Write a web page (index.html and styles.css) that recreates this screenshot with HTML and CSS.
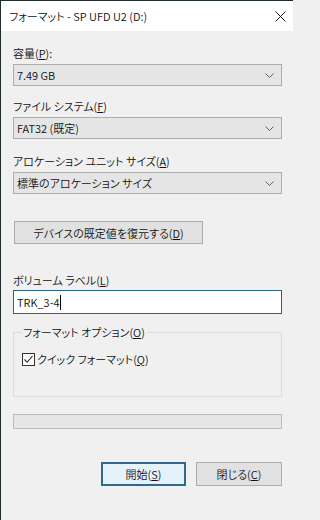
FILE: index.html
```html
<!DOCTYPE html>
<html lang="ja">
<head>
<meta charset="utf-8">
<title>フォーマット</title>
<link rel="stylesheet" href="styles.css">
</head>
<body>
<div class="window">
  <div class="titlebar">
    <span class="title">フォーマット - SP UFD U2 (D:)</span>
    <svg class="close" width="11" height="11" viewBox="0 0 11 11"><path d="M0.5 0.5 L10.5 10.5 M10.5 0.5 L0.5 10.5" stroke="#1a1a1a" stroke-width="1" fill="none"/></svg>
  </div>
  <div class="content">
    <div class="label l1">容量(<u>P</u>):</div>
    <div class="combo"><span>7.49 GB</span><svg class="chev" width="9" height="5" viewBox="0 0 9 5"><path d="M0.5 0.5 L4.5 4.5 L8.5 0.5" stroke="#606060" fill="none"/></svg></div>

    <div class="label l2">ファイル システム(<u>F</u>)</div>
    <div class="combo"><span>FAT32 (既定)</span><svg class="chev" width="9" height="5" viewBox="0 0 9 5"><path d="M0.5 0.5 L4.5 4.5 L8.5 0.5" stroke="#606060" fill="none"/></svg></div>

    <div class="label l3">アロケーション ユニット サイズ(<u>A</u>)</div>
    <div class="combo"><span>標準のアロケーション サイズ</span><svg class="chev" width="9" height="5" viewBox="0 0 9 5"><path d="M0.5 0.5 L4.5 4.5 L8.5 0.5" stroke="#606060" fill="none"/></svg></div>

    <div class="restore-row"><div class="btn restore">デバイスの既定値を復元する(<u>D</u>)</div></div>

    <div class="label l4">ボリューム ラベル(<u>L</u>)</div>
    <div class="textbox"><span>TRK_3-4</span><span class="caret"></span></div>

    <fieldset class="group">
      <legend>フォーマット オプション(<u>O</u>)</legend>
      <div class="check">
        <span class="box"><svg width="11" height="11" viewBox="0 0 11 11"><path d="M1.5 5.5 L4.2 8.3 L9.5 2" stroke="#222" stroke-width="1.1" fill="none"/></svg></span>
        <span>クイック フォーマット(<u>Q</u>)</span>
      </div>
    </fieldset>

    <div class="progress"></div>

    <div class="actions">
      <div class="btn primary">開始(<u>S</u>)</div>
      <div class="btn close-btn">閉じる(<u>C</u>)</div>
    </div>
  </div>
</div>
</body>
</html>
```

FILE: styles.css
```css
* { box-sizing: border-box; }
html { background: #f0f0f0; }
html, body { margin: 0; padding: 0; }
body {
  width: 293px;
  height: 520px;
  overflow: hidden;
  background: #f0f0f0;
  font-family: "Noto Sans CJK JP", "Noto Sans", sans-serif;
  font-size: 11px;
  font-weight: 350;
  color: #111;
  font-feature-settings: "palt";
}
u { text-decoration: underline; text-underline-offset: 1px; }
.window {
  width: 293px;
  height: 520px;
  border-left: 1px solid #1f2d2d;
  border-top: 1px solid #1f2d2d;
  background: #f0f0f0;
}
.titlebar {
  height: 30px;
  background: #fff;
  display: flex;
  align-items: center;
  justify-content: space-between;
  padding: 0 7px 0 8px;
}
.title { font-size: 11px; line-height: 16px; }
.close { display: block; margin-top: 1px; }
.content {
  padding: 13px 11px 0 12px;
  display: flex;
  flex-direction: column;
}
.label { line-height: 18px; height: 18px; margin-bottom: 2px; }
.l2 { margin-top: 11px; }
.l3 { margin-top: 13px; }
.l4 { margin-top: 27px; margin-bottom: 1px; }
.combo {
  height: 22px;
  border: 1px solid #adadad;
  background: #e5e5e5;
  display: flex;
  align-items: center;
  justify-content: space-between;
  padding: 0 7px 0 3px;
}
.combo span { line-height: 16px; }
.chev { display: block; }
.restore-row { margin-top: 27px; display: flex; padding-left: 1px; }
.btn {
  height: 23px;
  border: 1px solid #adadad;
  background: #e1e1e1;
  display: flex;
  align-items: center;
  justify-content: center;
  line-height: 16px;
}
.restore { width: 189px; }
.textbox {
  height: 24px;
  border: 1px solid #2c6488;
  background: #fff;
  display: flex;
  align-items: center;
  padding-left: 3px;
}
.caret { width: 1px; height: 15px; background: #000; margin-left: 1px; }
.group {
  margin: 9px 0 0 0;
  padding: 0 0 29px 8px;
  border: 1px solid #dcdcdc;
  min-width: 0;
}
.group legend { padding: 0 2px 0 1px; line-height: 18px; }
.check {
  margin-top: 10px;
  display: flex;
  align-items: center;
  gap: 2px;
  line-height: 16px;
}
.box {
  width: 13px;
  height: 13px;
  border: 1px solid #333;
  background: #fff;
  display: flex;
  align-items: center;
  justify-content: center;
}
.box svg { display: block; }
.progress {
  margin-top: 17px;
  height: 15px;
  border: 1px solid #bcbcbc;
  background: #e6e6e6;
}
.actions {
  margin-top: 33px;
  display: flex;
  justify-content: flex-end;
  gap: 10px;
}
.actions .btn { height: 24px; }
.primary {
  width: 85px;
  border: 2px solid #2e6a90;
  background: #e5f1fb;
}
.close-btn { width: 86px; }
```
